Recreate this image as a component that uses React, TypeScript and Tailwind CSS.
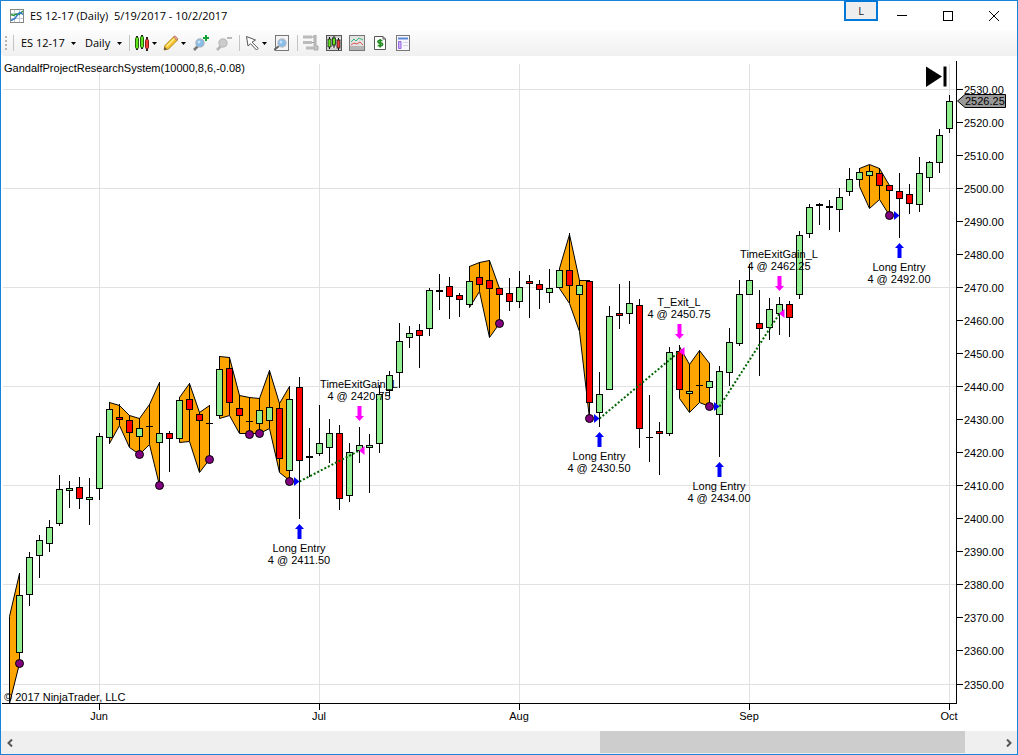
import { useState } from "react"
import type { ReactNode } from "react"

type Kind = "up" | "down" | "flat"
type Bar = [high: number, top: number, bottom: number, low: number, kind: Kind]

interface Marker {
  x: number
  tip: number
  textY: number
  title: string
  fill: string
  side: "entry" | "exit"
}

const FIRST_X = 19
const BAR_STEP = 10

// one entry per session, y values in chart units
const bars: Bar[] = [
  [573, 595, 653, 663, "up"],
  [552, 557, 595, 606, "up"],
  [535, 540, 556, 578, "up"],
  [520, 527, 544, 552, "up"],
  [475, 489, 524, 526, "up"],
  [481, 488, 491, 508, "up"],
  [477, 487, 499, 509, "down"],
  [478, 497, 500, 525, "up"],
  [433, 436, 489, 500, "up"],
  [402, 409, 438, 444, "up"],
  [404, 417, 420, 425, "down"],
  [415, 420, 433, 447, "down"],
  [418, 428, 437, 454, "up"],
  [404, 426, 427, 444, "flat"],
  [382, 433, 443, 485, "up"],
  [431, 433, 439, 472, "down"],
  [397, 400, 439, 442, "up"],
  [383, 399, 410, 441, "down"],
  [412, 414, 421, 472, "down"],
  [405, 423, 424, 459, "flat"],
  [356, 369, 416, 418, "up"],
  [357, 368, 403, 415, "down"],
  [395, 408, 416, 433, "down"],
  [397, 421, 422, 434, "flat"],
  [398, 410, 424, 433, "up"],
  [370, 407, 421, 428, "up"],
  [403, 408, 459, 472, "down"],
  [386, 399, 471, 481, "up"],
  [377, 387, 461, 519, "down"],
  [428, 456, 458, 477, "flat"],
  [405, 443, 454, 456, "up"],
  [419, 433, 448, 463, "up"],
  [425, 433, 499, 510, "down"],
  [443, 452, 496, 502, "up"],
  [427, 445, 451, 463, "up"],
  [434, 445, 448, 493, "up"],
  [385, 394, 444, 453, "up"],
  [371, 375, 391, 396, "up"],
  [323, 341, 373, 388, "up"],
  [326, 333, 338, 348, "up"],
  [324, 330, 336, 368, "down"],
  [288, 290, 329, 336, "up"],
  [274, 290, 292, 310, "flat"],
  [277, 286, 297, 319, "down"],
  [293, 295, 300, 317, "down"],
  [266, 281, 305, 307, "up"],
  [262, 277, 285, 291, "down"],
  [260, 280, 289, 337, "down"],
  [288, 288, 295, 323, "down"],
  [278, 293, 302, 311, "down"],
  [271, 287, 302, 308, "up"],
  [275, 281, 284, 318, "down"],
  [280, 284, 290, 309, "down"],
  [269, 288, 293, 303, "up"],
  [268, 270, 288, 288, "up"],
  [233, 270, 286, 303, "down"],
  [280, 285, 295, 331, "up"],
  [280, 281, 403, 418, "down"],
  [372, 394, 413, 427, "up"],
  [306, 316, 390, 390, "up"],
  [284, 313, 316, 329, "down"],
  [281, 303, 314, 324, "up"],
  [299, 305, 429, 448, "down"],
  [395, 437, 438, 462, "flat"],
  [422, 431, 434, 475, "down"],
  [347, 352, 434, 436, "up"],
  [345, 351, 390, 398, "down"],
  [364, 391, 394, 412, "up"],
  [350, 385, 386, 402, "flat"],
  [363, 381, 388, 406, "up"],
  [366, 371, 415, 457, "up"],
  [328, 342, 373, 386, "up"],
  [280, 294, 344, 346, "up"],
  [264, 280, 295, 295, "up"],
  [290, 323, 329, 376, "down"],
  [298, 309, 328, 340, "up"],
  [297, 304, 314, 335, "up"],
  [301, 304, 318, 337, "down"],
  [231, 235, 295, 299, "up"],
  [204, 207, 234, 238, "up"],
  [203, 204, 206, 225, "flat"],
  [200, 206, 208, 230, "flat"],
  [188, 197, 210, 232, "up"],
  [168, 179, 192, 196, "up"],
  [168, 172, 180, 186, "up"],
  [165, 171, 176, 208, "up"],
  [168, 173, 186, 199, "down"],
  [185, 185, 191, 215, "down"],
  [173, 191, 199, 238, "down"],
  [184, 194, 204, 214, "down"],
  [157, 173, 205, 212, "up"],
  [161, 162, 178, 192, "up"],
  [129, 135, 163, 173, "up"],
  [95, 101, 129, 133, "up"],
]

// shaded runs: first x, upper edge, lower edge
const zones: [number, number[], number[]][] = [
  [9, [616, 573], [703, 663]],
  [109, [402, 405, 415, 418, 404, 382], [443, 425, 447, 454, 444, 485]],
  [179, [397, 383, 412, 405], [442, 441, 472, 459]],
  [219, [356, 357, 395, 397, 398, 370, 403, 386], [418, 415, 433, 433, 433, 428, 472, 480]],
  [469, [266, 262, 260, 288], [307, 291, 337, 323]],
  [559, [268, 234, 280, 280], [288, 303, 331, 418]],
  [679, [346, 364, 350, 363], [398, 412, 402, 406]],
  [859, [168, 164, 168, 185], [186, 208, 199, 215]],
]

const dots = [
  [19, 663], [139, 454], [159, 485], [209, 459], [249, 434], [259, 433], [289, 481],
  [499, 323], [589, 418], [709, 406], [889, 215],
]

const trades = [
  { from: [299, 481], to: [359, 450] },
  { from: [599, 418], to: [679, 351] },
  { from: [719, 406], to: [779, 313] },
  { from: [899, 215], to: null },
]

const markers: Marker[] = [
  { x: 299, tip: 524, textY: 552, title: "Long Entry", fill: "4 @ 2411.50", side: "entry" },
  { x: 359, tip: 421, textY: 388, title: "TimeExitGain_L", fill: "4 @ 2420.75", side: "exit" },
  { x: 599, tip: 432, textY: 460, title: "Long Entry", fill: "4 @ 2430.50", side: "entry" },
  { x: 679, tip: 339, textY: 306, title: "T_Exit_L", fill: "4 @ 2450.75", side: "exit" },
  { x: 719, tip: 462, textY: 490, title: "Long Entry", fill: "4 @ 2434.00", side: "entry" },
  { x: 779, tip: 291, textY: 258, title: "TimeExitGain_L", fill: "4 @ 2462.25", side: "exit" },
  { x: 899, tip: 243, textY: 271, title: "Long Entry", fill: "4 @ 2492.00", side: "entry" },
]

const months = [
  { x: 99, label: "Jun" },
  { x: 319, label: "Jul" },
  { x: 519, label: "Aug" },
  { x: 749, label: "Sep" },
  { x: 949, label: "Oct" },
]

const prices = Array.from({ length: 19 }, (_, i) => 2530 - i * 10)
const priceY = (p: number) => Math.floor(89 + ((2530 - p) * 595) / 180)

const bodyFill = { up: "#90ee90", down: "#ff0000", flat: "#000" }

function zonePoints(x: number, upper: number[], lower: number[]) {
  const top = upper.map((y, i) => `${x + i * BAR_STEP + 0.5},${y + 0.5}`)
  const bottom = lower.map((y, i) => `${x + i * BAR_STEP + 0.5},${y + 0.5}`).reverse()
  return [...top, ...bottom].join(" ")
}

function Chart() {
  return (
    <svg
      viewBox="1 56 1016 675"
      className="block w-full h-auto font-['Liberation_Sans',Arial,sans-serif] text-[11px]"
      role="img"
      aria-label="ES 12-17 daily price chart"
    >
      {/* Grid */}
      <g fill="#e1e1e1">
        {prices.filter((_, i) => i % 3 === 0).map((p) => (
          <rect key={p} x={3} y={priceY(p)} width={953} height={1} />
        ))}
        {months.map((m) => (
          <rect key={m.x} x={m.x} y={64} width={1} height={639} />
        ))}
      </g>

      {/* Shaded zones */}
      {zones.map(([x, upper, lower]) => (
        <polygon key={x} points={zonePoints(x, upper, lower)} fill="#ffa500" stroke="#000" />
      ))}

      {/* Candles */}
      {bars.map(([high, top, bottom, low, kind], i) => {
        const x = FIRST_X + i * BAR_STEP
        return (
          <g key={x}>
            <rect x={x} y={high} width={1} height={low - high} />
            {kind === "flat" ? (
              <rect x={x - 3} y={top} width={7} height={bottom - top} />
            ) : (
              <rect x={x - 2.5} y={top + 0.5} width={6} height={bottom - top - 1} fill={bodyFill[kind]} stroke="#000" />
            )}
          </g>
        )
      })}

      {dots.map(([x, y]) => (
        <circle key={x} cx={x + 0.5} cy={y + 0.5} r={4} fill="#800080" stroke="#000" />
      ))}

      {/* Trades */}
      {trades.map(({ from, to }) => (
        <g key={from[0]}>
          {to && (
            <line
              x1={from[0] + 0.5}
              y1={from[1] + 0.5}
              x2={to[0] + 0.5}
              y2={to[1] + 0.5}
              stroke="#006400"
              strokeWidth={2}
              strokeDasharray="2 2"
            />
          )}
          <path d={`M${from[0] - 5} ${from[1] - 4}l5.5 4.5l-5.5 4.5z`} fill="#0000ff" />
          {to && <path d={`M${to[0] + 5.5} ${to[1] - 4}l-5.5 4.5l5.5 4.5z`} fill="#ff00ff" />}
        </g>
      ))}

      {markers.map((m) => (
        <g key={m.x} textAnchor="middle">
          {m.side === "entry" ? (
            <path d={`M${m.x + 0.5} ${m.tip}l4.5 5h-2.5v10h-4v-10h-2.5z`} fill="#0000ff" />
          ) : (
            <path d={`M${m.x + 0.5} ${m.tip}l4.5 -5h-2.5v-10h-4v10h-2.5z`} fill="#ff00ff" />
          )}
          <text x={m.x} y={m.textY}>{m.title}</text>
          <text x={m.x} y={m.textY + 12}>{m.fill}</text>
        </g>
      ))}

      {/* Axes */}
      <rect x={956} y={61} width={1} height={643} />
      <rect x={2} y={703} width={955} height={1} />
      {prices.map((p) => (
        <g key={p}>
          <rect x={957} y={priceY(p)} width={6} height={1} />
          <text x={964} y={priceY(p) + 5}>{p.toFixed(2)}</text>
        </g>
      ))}
      {months.map((m) => (
        <g key={m.x}>
          <rect x={m.x} y={704} width={1} height={6} />
          <text x={m.x} y={720} textAnchor="middle">{m.label}</text>
        </g>
      ))}

      {/* Last price */}
      <path d="M957.5 101L965 94.5H1005.5V107.5H965z" fill="#999" stroke="#000" />
      <text x={965} y={105}>2526.25</text>

      <path d="M926 66.500L942 76.500L926 87z" />
      <rect x={943.500} y={66.500} width={3} height={20} />

      <text x={4} y={72}>GandalfProjectResearchSystem(10000,8,6,-0.08)</text>
      <text x={4} y={701}>© 2017 NinjaTrader, LLC</text>
    </svg>
  )
}

function Icon({ children }: { children: ReactNode }) {
  return (
    <svg viewBox="0 0 16 16" className="w-4 h-4 shrink-0" fill="none" aria-hidden="true">
      {children}
    </svg>
  )
}

function Caret() {
  return (
    <svg viewBox="0 0 5 3" className="w-[5px] h-[3px] shrink-0" aria-hidden="true">
      <path d="M0 0h5L2.500 3z" />
    </svg>
  )
}

function Separator() {
  return <span className="w-px h-4 bg-[#c4c4c4] shrink-0" />
}

function ToolButton({ label, className = "", children }: { label: string; className?: string; children: ReactNode }) {
  return (
    <button aria-label={label} className={`flex items-center shrink-0 ${className}`}>
      {children}
    </button>
  )
}

function CandleShapes() {
  return (
    <>
      <path d="M3 1v14M8 0v14M13 2v14" stroke="#222" strokeWidth={2} />
      <rect x={1.500} y={2.500} width={3} height={11} rx={1} fill="#5fe51b" stroke="#27600f" />
      <rect x={6.500} y={1.500} width={3} height={11} rx={1} fill="#5fe51b" stroke="#27600f" />
      <rect x={11.500} y={4.500} width={3} height={9} rx={1} fill="#f0403a" stroke="#8b1b18" />
    </>
  )
}

function Toolbar() {
  return (
    <div className="flex items-center h-[26px] pl-1 rounded-bl bg-linear-to-b from-[#fdfdfd] to-[#f0f0f0] overflow-hidden">
      <svg viewBox="0 0 2 14" className="w-0.5 h-3.5 shrink-0" fill="#b5b5b5" aria-hidden="true">
        <path d="M0 0h2v2H0zM0 4h2v2H0zM0 8h2v2H0zM0 12h2v2H0z" />
      </svg>
      <span className="w-1.5 shrink-0" />
      <Separator />
      <ToolButton label="Instrument ES 12-17" className="ml-[7px] gap-[5px]">
        <span className="w-[45px] text-left">ES 12-17</span>
        <Caret />
      </ToolButton>
      <ToolButton label="Interval Daily" className="ml-[9px] gap-[5px]">
        <span className="w-[27px] text-left">Daily</span>
        <Caret />
      </ToolButton>
      <span className="w-[7px] shrink-0" />
      <Separator />
      <ToolButton label="Chart style" className="ml-1 gap-0.5">
        <Icon><CandleShapes /></Icon>
        <Caret />
      </ToolButton>
      <ToolButton label="Drawing tools" className="ml-1.5 gap-0.5">
        <Icon>
          <path d="M1 15l1-4.500L11 1.500l3.500 3.500L5.500 14z" fill="#f7c331" stroke="#b58517" />
          <path d="M3.500 11.500L12 3" stroke="#fff08a" strokeWidth={1.500} />
          <path d="M10.500 2l1.500-1.200 3 3-1.200 1.500z" fill="#f3a9a0" stroke="#a86a50" strokeWidth={0.800} />
          <path d="M1 15l.7-3 2.300 2.300z" fill="#555" />
        </Icon>
        <Caret />
      </ToolButton>
      <ToolButton label="Zoom in" className="ml-[7px]">
        <Icon>
          <path d="M1 15l4-4" stroke="#777" strokeWidth={2.500} />
          <circle cx={7} cy={8} r={4} fill="#86bce8" stroke="#a7b6c5" strokeWidth={1.500} />
          <circle cx={6} cy={7} r={1.500} fill="#c9e5fa" />
          <path d="M13 0v6M10 3h6" stroke="#15a335" strokeWidth={2} />
        </Icon>
      </ToolButton>
      <ToolButton label="Zoom out" className="ml-[7px]">
        <Icon>
          <path d="M1 15l4-4" stroke="#b5b5b5" strokeWidth={2.500} />
          <circle cx={7} cy={8} r={4} fill="#ccc" stroke="#bebebe" strokeWidth={1.500} />
          <path d="M11 3h5" stroke="#b8b8b8" strokeWidth={2} />
        </Icon>
      </ToolButton>
      <span className="w-[7px] shrink-0" />
      <Separator />
      <ToolButton label="Pointer" className="ml-[5px] gap-px">
        <Icon>
          <path d="M1.500 1.500l1.500 9.500 2.500-2.300 6 6.300 1.700-1.700-6.200-6.100 3.500-2.200z" fill="#fff" stroke="#555" />
        </Icon>
        <Caret />
      </ToolButton>
      <ToolButton label="Data box" className="ml-[7px]">
        <Icon>
          <rect x={1.500} y={0.500} width={13} height={15} fill="#f5f5f5" stroke="#777" />
          <path d="M0 15l5-4" stroke="#666" strokeWidth={2} />
          <circle cx={8} cy={8} r={4} fill="#86bce8" stroke="#b0bccb" strokeWidth={1.500} />
          <circle cx={7} cy={7} r={1.500} fill="#c4e2f8" />
        </Icon>
      </ToolButton>
      <span className="w-[7px] shrink-0" />
      <Separator />
      <ToolButton label="Chart trader" className="ml-[5px]">
        <Icon>
          <path d="M0 2h9M0 7.500h9M3 13h7" stroke="#bbb" strokeWidth={3} />
          <path d="M9 7.500h2M9 2h2M10 13h2" stroke="#999" />
          <path d="M11 0h2v11h2v4h-4z" fill="#c4c4c4" stroke="#aaa" />
        </Icon>
      </ToolButton>
      <ToolButton label="Data series" className="ml-[7px]">
        <Icon>
          <rect x={0.500} y={0.500} width={15} height={15} fill="#cfcfcf" stroke="#555" />
          <path d="M1 3.500h14M1 6.500h14M1 9.500h14M1 12.500h14" stroke="#f2f2f2" />
          <path d="M3.500 2v12M8 1v12M12.500 3v12" stroke="#111" />
          <rect x={2} y={4} width={3} height={8} fill="#5fe51b" stroke="#1c1c1c" strokeWidth={0.800} />
          <rect x={6.500} y={3} width={3} height={7} fill="#5fe51b" stroke="#1c1c1c" strokeWidth={0.800} />
          <rect x={11} y={5} width={3} height={8} fill="#f0403a" stroke="#1c1c1c" strokeWidth={0.800} />
        </Icon>
      </ToolButton>
      <ToolButton label="Indicators" className="ml-[7px]">
        <Icon>
          <rect x={0.500} y={0.500} width={15} height={15} fill="#e2e2e2" stroke="#777" />
          <path d="M1 11h14v4H1z" fill="#b5b5b5" />
          <path d="M2 7l3-3 2 2 3-3 4 2" stroke="#37b777" />
          <path d="M2 10l3-2 3 1 3-2 3 3" stroke="#e1554d" />
        </Icon>
      </ToolButton>
      <ToolButton label="Strategies" className="ml-[7px]">
        <Icon>
          <path d="M2.500 1.500h8.500l2.500 2.500v10.500h-11z" fill="#fff" stroke="#555" />
          <path d="M11 1.500v2.500h2.500" stroke="#555" />
          <path d="M10.500 5.500H7.200C5.500 5.500 5.500 8 7.200 8h2C11 8 11 10.700 9.200 10.700H5.700M8.200 4v8.500" stroke="#228b22" strokeWidth={1.700} />
        </Icon>
      </ToolButton>
      <ToolButton label="Properties" className="ml-[7px]">
        <Icon>
          <rect x={1.500} y={0.500} width={13} height={15} fill="#f7f7ff" stroke="#777" />
          <path d="M3 3.500h10" stroke="#5c86d8" strokeWidth={2} />
          <path d="M3.500 6.500h2.500v7h-2.500z" fill="#c9adf5" stroke="#9a68e5" />
          <path d="M8 7.500h5M8 10.500h5" stroke="#d5d5e2" />
        </Icon>
      </ToolButton>
    </div>
  )
}

function TitleBar() {
  return (
    <header className="flex items-center h-[29px] pl-2">
      <Icon>
        <rect x={1.500} y={1.500} width={13} height={13} fill="#fff" stroke="#888" />
        <path d="M2 5.500h12M2 10.500h12M5.500 2v12M10.500 2v12" stroke="#c5cce0" />
        <path d="M2 6.500L4.500 7.500 7 6l3 .5 4-3.500" stroke="#259a35" strokeWidth={1.500} />
        <path d="M2 12.500l4-2 3-4.500 2-1.500 3 2" stroke="#3278c8" strokeWidth={1.500} />
      </Icon>
      <h1 className="ml-[5px] whitespace-pre">{"ES 12-17 (Daily)  5/19/2017 - 10/2/2017"}</h1>
      <button className="ml-auto -mt-px mr-px self-start flex items-center justify-center w-[34px] h-[21px] border-2 border-[#0078d7] bg-[#eee] text-[#223]">
        L
      </button>
      <button aria-label="Minimize" className="flex justify-center items-center w-[46px] h-full">
        <span className="w-2.5 h-px bg-black" />
      </button>
      <button aria-label="Maximize" className="flex justify-center items-center w-[46px] h-full">
        <span className="w-2.5 h-2.5 border border-black" />
      </button>
      <button aria-label="Close" className="flex justify-center items-center w-[46px] h-full">
        <svg viewBox="0 0 10 10" className="w-2.5 h-2.5" stroke="#000">
          <path d="M0 0L10 10M10 0L0 10" />
        </svg>
      </button>
    </header>
  )
}

function ScrollBar() {
  const [start, setStart] = useState(59.3)
  const size = 37.1
  const move = (by: number) => setStart((s) => Math.max(0, Math.min(100 - size, s + by)))

  return (
    <div className="flex h-[23px] bg-[#efefef]">
      <button aria-label="Scroll left" onClick={() => move(-2)} className="flex items-center justify-center w-[17px]">
        <svg viewBox="0 0 6 8" className="w-1.5 h-2" fill="none" stroke="#555" strokeWidth={2}>
          <path d="M5 0.500L1.500 4L5 7.500" />
        </svg>
      </button>
      <div className="flex-1">
        <div className="h-[22px] bg-[#cdcdcd]" style={{ width: `${size}%`, marginLeft: `${start}%` }} />
      </div>
      <button aria-label="Scroll right" onClick={() => move(2)} className="flex items-center justify-center w-[17px]">
        <svg viewBox="0 0 6 8" className="w-1.5 h-2" fill="none" stroke="#555" strokeWidth={2}>
          <path d="M1 0.500L4.500 4L1 7.500" />
        </svg>
      </button>
    </div>
  )
}

export default function App() {
  return (
    <main className="border border-[#1883d7] bg-white text-black font-['Open_Sans','Noto_Sans',sans-serif] text-[11px] leading-4">
      <TitleBar />
      <Toolbar />
      <Chart />
      <ScrollBar />
    </main>
  )
}
